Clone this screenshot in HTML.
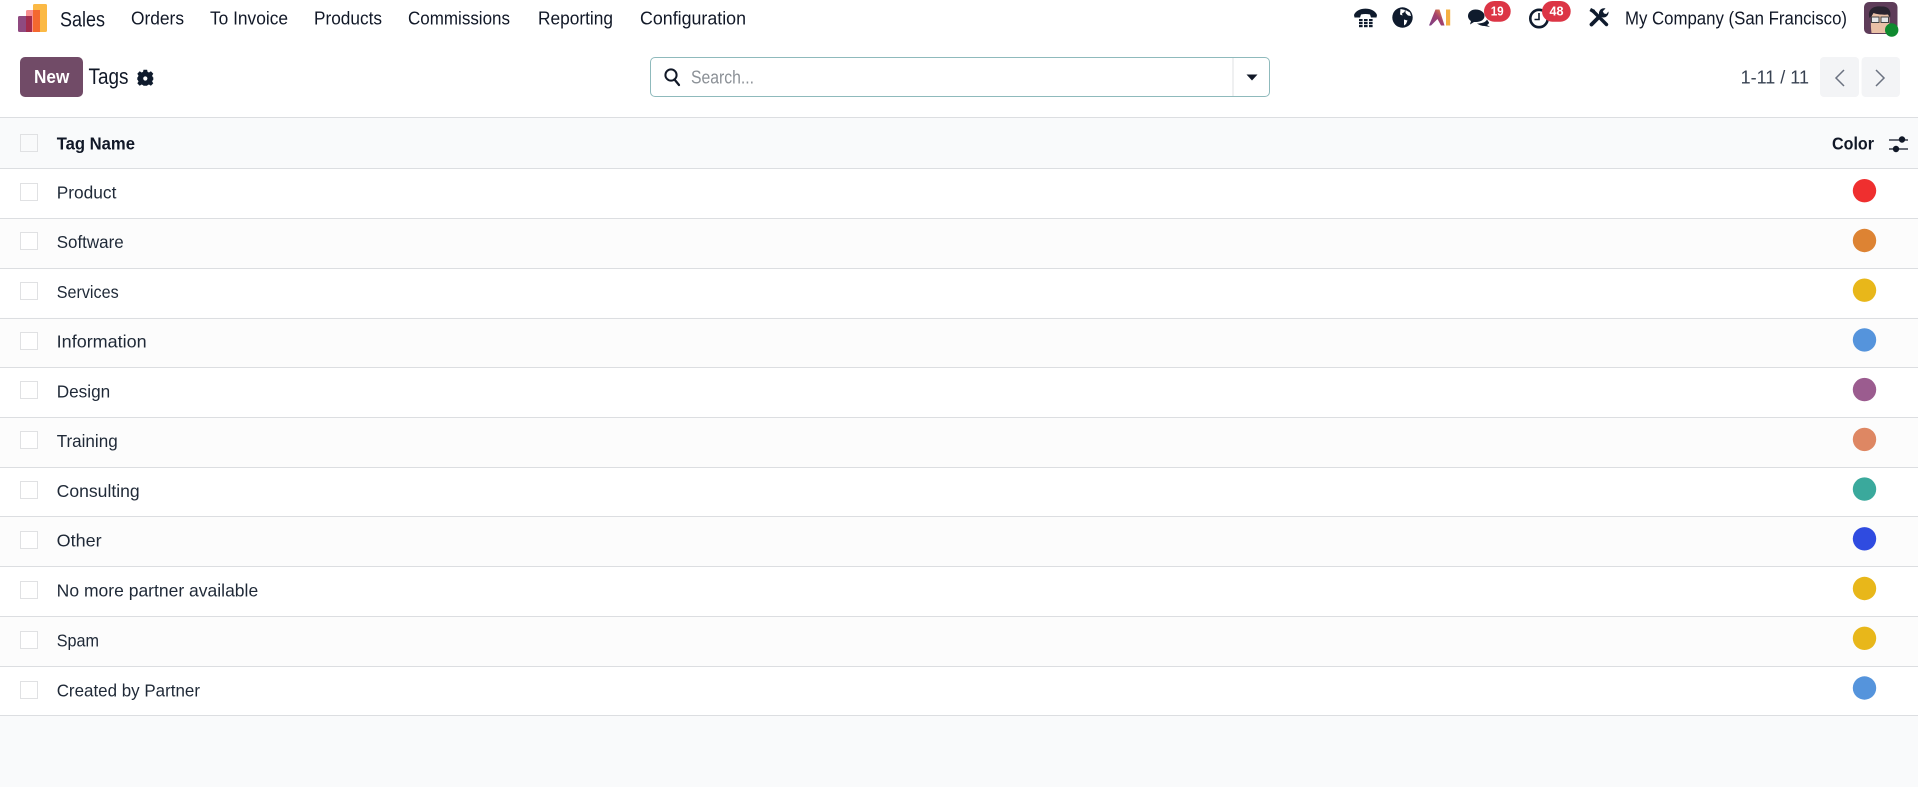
<!DOCTYPE html>
<html lang="en"><head><meta charset="utf-8"><title>Tags</title>
<style>
html,body{margin:0;padding:0;background:#fff;width:1918px;height:787px;overflow:hidden}
svg{display:block;position:absolute;left:0;top:0}
text{font-family:"Liberation Sans",sans-serif;font-size:17.5px;fill:#1f2937}
.n{font-size:18px;fill:#111827}
.b{font-weight:bold}
.r{fill:#1f2937}
</style></head><body>
<svg width="1918" height="787" viewBox="0 0 1918 787" xmlns="http://www.w3.org/2000/svg">
<rect width="1918" height="787" fill="#fff"/>
<!-- logo -->
<rect x="33" y="4" width="14" height="28" rx="1.5" fill="#fbb945"/>
<rect x="26" y="10" width="14" height="22" rx="1.5" fill="#f78f8f"/>
<rect x="33" y="10" width="7" height="22" fill="#f4682f"/>
<rect x="18" y="16" width="14" height="16" rx="1.5" fill="#8f4a80"/>
<rect x="26" y="16" width="6" height="16" fill="#a32c4c"/>
<text x="60" y="26.5" style="font-size:21px;fill:#111827" textLength="45" lengthAdjust="spacingAndGlyphs">Sales</text>
<text class="n" x="131" y="24.5" textLength="53" lengthAdjust="spacingAndGlyphs">Orders</text>
<text class="n" x="210" y="24.5" textLength="78" lengthAdjust="spacingAndGlyphs">To Invoice</text>
<text class="n" x="314" y="24.5" textLength="68" lengthAdjust="spacingAndGlyphs">Products</text>
<text class="n" x="408" y="24.5" textLength="102" lengthAdjust="spacingAndGlyphs">Commissions</text>
<text class="n" x="538" y="24.5" textLength="75" lengthAdjust="spacingAndGlyphs">Reporting</text>
<text class="n" x="640" y="24.5" textLength="106" lengthAdjust="spacingAndGlyphs">Configuration</text>

<!-- phone -->
<path d="M1354 15C1357 6.500 1374 6.500 1377 15L1376.500 17.500H1371L1370 14.500C1367 13.800 1364 13.800 1361 14.500L1360 17.500H1354.500Z" fill="#0f1b2d"/>
<g fill="#0f1b2d"><rect x="1359" y="19" width="3.600" height="2.200"/><rect x="1364" y="19" width="3.600" height="2.200"/><rect x="1369" y="19" width="3.600" height="2.200"/><rect x="1359" y="22" width="3.600" height="2.200"/><rect x="1364" y="22" width="3.600" height="2.200"/><rect x="1369" y="22" width="3.600" height="2.200"/><rect x="1359" y="25" width="3.600" height="2.200"/><rect x="1364" y="25" width="3.600" height="2.200"/><rect x="1369" y="25" width="3.600" height="2.200"/></g>
<!-- globe -->
<circle cx="1402.500" cy="17.500" r="10.200" fill="#0f1b2d"/>
<path d="M1400.500 9L1405 10L1404.500 12L1402 13.500L1402.500 15.500L1400 14.500ZM1405.500 10L1410 12.500L1411 16L1408 15.500L1405.500 13ZM1404 19.500L1407.500 20.500L1406 24L1404 25.500Z" fill="#fff"/>
<!-- AI -->
<defs><linearGradient id="ai" x1="0" y1="1" x2="1" y2="0"><stop offset="0" stop-color="#7b3f86"/><stop offset=".55" stop-color="#a3416c"/><stop offset="1" stop-color="#f39a3a"/></linearGradient></defs>
<path d="M1435.500 9.500H1439.500L1444.500 25.500H1441L1437.500 19L1431 25.500H1429Z" fill="url(#ai)"/>
<rect x="1446" y="9.500" width="4.200" height="16" fill="#f5b041"/>
<!-- chat -->
<path d="M1475.500 9.500C1481 9.500 1484.500 12.500 1484.500 16C1484.500 19.500 1481 22 1476 22L1474 22L1470 24.500L1471 21C1469.300 20 1468 18 1468 16C1468 12.500 1471 9.500 1475.500 9.500Z" fill="#0f1b2d"/>
<path d="M1477 23.500C1481.500 23.500 1485.500 22.500 1487 19.500L1489 22.500C1489 23.500 1488 24.500 1487 25L1490 27L1484.500 26C1482 26 1479 25 1477 23.500Z" fill="#0f1b2d"/>
<rect x="1484" y="1" width="26.700" height="20.700" rx="10.300" fill="#dc3545"/>
<text x="1490.700" y="15.500" class="b" style="font-size:13px;fill:#fff" textLength="13" lengthAdjust="spacingAndGlyphs">19</text>
<!-- clock -->
<circle cx="1539" cy="18.500" r="8.700" fill="none" stroke="#0f1b2d" stroke-width="2.600"/>
<path d="M1539 13V19.500H1534.500" fill="none" stroke="#0f1b2d" stroke-width="1.600"/>
<rect x="1542" y="1" width="28.700" height="20.700" rx="10.300" fill="#dc3545"/>
<text x="1549.500" y="15.500" class="b" style="font-size:13px;fill:#fff" textLength="14" lengthAdjust="spacingAndGlyphs">48</text>
<!-- tools -->
<path d="M1606.500 24.500L1593.500 11.500" stroke="#0f1b2d" stroke-width="3.400" fill="none" stroke-linecap="round"/>
<path d="M1589.500 11L1591 8L1595 10L1593.500 13.500Z" fill="#0f1b2d"/>
<path d="M1591.500 24.500L1601 15" stroke="#0f1b2d" stroke-width="3.800" stroke-linecap="round" fill="none"/>
<path d="M1599 14.500C1598.500 10.500 1601.500 7.500 1605.500 8.500L1602.800 11.300L1604 13.500L1606.300 14L1608.500 11.500C1609 15 1606 18 1602.500 17.500Z" fill="#0f1b2d"/>
<text x="1625" y="24.500" class="n" textLength="222" lengthAdjust="spacingAndGlyphs">My Company (San Francisco)</text>
<!-- avatar -->
<rect x="1864" y="2" width="33.500" height="32" rx="5" fill="#5e3c59"/>
<path d="M1871.500 33C1870.500 25 1870.500 17 1873 13H1888.500C1890 17 1890 25 1887 33Z" fill="#e9c0a6"/>
<path d="M1869.500 18C1867 10 1873 5.500 1881 6.500C1888 6 1892 10 1890 18L1888 14.500C1884 15 1877 14.500 1873.500 13C1872.500 15 1871.500 16.500 1869.500 18Z" fill="#2a2430"/>
<rect x="1871.500" y="17" width="7.500" height="5.500" fill="#e6e8ea" stroke="#444" stroke-width="1"/>
<rect x="1881" y="17" width="7.500" height="5.500" fill="#e6e8ea" stroke="#444" stroke-width="1"/>
<circle cx="1891.700" cy="30" r="6.700" fill="#0f8a2f"/>

<!-- control panel -->
<rect x="20" y="57" width="63" height="40" rx="5" fill="#714b67"/>
<text x="34" y="83" class="b" style="font-size:18px;fill:#fff" textLength="35.300" lengthAdjust="spacingAndGlyphs">New</text>
<text x="88.500" y="84" style="font-size:22px;fill:#111827" textLength="40" lengthAdjust="spacingAndGlyphs">Tags</text>
<g fill="#0f1b2d" transform="translate(145.300 77.700)">
<path fill-rule="evenodd" d="M-1.800-8H1.800L2.300-5.800L3.700-5.200L5.600-6.400L8-4L6.800-2.100L7.400-.6L8-.3V2.100L7.400 2.500L6.800 3.900L8 5.600L5.600 8L3.700 6.800L2.300 7.400L1.800 8H-1.800L-2.300 7.400L-3.700 6.800L-5.600 8L-8 5.600L-6.800 3.900L-7.400 2.500L-8 2.100V-.3L-7.400-.6L-6.800-2.100L-8-4L-5.600-6.400L-3.700-5.200L-2.300-5.800ZM2.100.8A2.100 2.100 0 1 0-2.100.8A2.100 2.100 0 1 0 2.100.8Z"/>
</g>

<!-- search -->
<rect x="650.500" y="57.500" width="619" height="39" rx="4.500" fill="#fff" stroke="#8fbabc" stroke-width="1"/>
<line x1="1233" y1="58" x2="1233" y2="96" stroke="#dfe1e3" stroke-width="1"/>
<circle cx="671" cy="75" r="5.600" fill="none" stroke="#111827" stroke-width="2"/>
<line x1="674.500" y1="79.500" x2="679" y2="85" stroke="#111827" stroke-width="2.200" stroke-linecap="round"/>
<text x="691" y="83.500" style="font-size:18.500px;fill:#8b9096" textLength="63" lengthAdjust="spacingAndGlyphs">Search...</text>
<path d="M1246.500 74.500H1257.500L1252 80.500Z" fill="#111827"/>

<!-- pager -->
<text x="1740.600" y="83.500" style="font-size:18.500px;fill:#374151" textLength="68.400" lengthAdjust="spacingAndGlyphs">1-11 / 11</text>
<rect x="1820" y="57" width="39" height="40" rx="4" fill="#f3f4f6"/>
<rect x="1861.600" y="57" width="38.400" height="40" rx="4" fill="#f3f4f6"/>
<path d="M1844 70L1836 78L1844 86" fill="none" stroke="#6b7280" stroke-width="1.500"/>
<path d="M1876 70L1884 78L1876 86" fill="none" stroke="#6b7280" stroke-width="1.500"/>

<!-- table -->
<rect x="0" y="117" width="1918" height="670" fill="#f9fafb"/>
<rect x="0" y="168.500" width="1918" height="49.700" fill="#fff"/>
<rect x="0" y="218.200" width="1918" height="49.700" fill="#fcfcfc"/>
<rect x="0" y="268" width="1918" height="49.700" fill="#fff"/>
<rect x="0" y="317.700" width="1918" height="49.700" fill="#fcfcfc"/>
<rect x="0" y="367.400" width="1918" height="49.700" fill="#fff"/>
<rect x="0" y="417.100" width="1918" height="49.700" fill="#fcfcfc"/>
<rect x="0" y="466.900" width="1918" height="49.700" fill="#fff"/>
<rect x="0" y="516.600" width="1918" height="49.700" fill="#fcfcfc"/>
<rect x="0" y="566.300" width="1918" height="49.700" fill="#fff"/>
<rect x="0" y="616" width="1918" height="49.700" fill="#fcfcfc"/>
<rect x="0" y="665.800" width="1918" height="49.700" fill="#fff"/>
<g stroke="#dcdee1" stroke-width="1">
<line x1="0" x2="1918" y1="117.500" y2="117.500"/>
<line x1="0" x2="1918" y1="168.500" y2="168.500"/>
<line x1="0" x2="1918" y1="218.500" y2="218.500"/>
<line x1="0" x2="1918" y1="268.500" y2="268.500"/>
<line x1="0" x2="1918" y1="318.500" y2="318.500"/>
<line x1="0" x2="1918" y1="367.500" y2="367.500"/>
<line x1="0" x2="1918" y1="417.500" y2="417.500"/>
<line x1="0" x2="1918" y1="467.500" y2="467.500"/>
<line x1="0" x2="1918" y1="516.500" y2="516.500"/>
<line x1="0" x2="1918" y1="566.500" y2="566.500"/>
<line x1="0" x2="1918" y1="616.500" y2="616.500"/>
<line x1="0" x2="1918" y1="666.500" y2="666.500"/>
<line x1="0" x2="1918" y1="715.500" y2="715.500"/>
</g>
<g fill="#fff" stroke="#e0e1e3" stroke-width="1">
<rect x="20.500" y="134.500" width="17" height="17" fill="#f9fafb"/>
<rect x="20.500" y="183.500" width="17" height="17"/>
<rect x="20.500" y="232.500" width="17" height="17"/>
<rect x="20.500" y="282.500" width="17" height="17"/>
<rect x="20.500" y="332.500" width="17" height="17"/>
<rect x="20.500" y="381.500" width="17" height="17"/>
<rect x="20.500" y="431.500" width="17" height="17"/>
<rect x="20.500" y="481.500" width="17" height="17"/>
<rect x="20.500" y="531.500" width="17" height="17"/>
<rect x="20.500" y="581.500" width="17" height="17"/>
<rect x="20.500" y="631.500" width="17" height="17"/>
<rect x="20.500" y="681.500" width="17" height="17"/>
</g>
<text x="56.700" y="149.500" class="b" style="font-size:17.500px;fill:#111827" textLength="78.300" lengthAdjust="spacingAndGlyphs">Tag Name</text>
<text x="1832" y="149.500" class="b" style="font-size:17.500px;fill:#111827" textLength="42" lengthAdjust="spacingAndGlyphs">Color</text>
<g stroke="#111827" stroke-width="1.300"><line x1="1889" x2="1908" y1="140" y2="140"/><line x1="1889" x2="1908" y1="149" y2="149"/></g>
<circle cx="1902" cy="139.500" r="3.200" fill="#111827"/><circle cx="1896" cy="149" r="3.200" fill="#111827"/>

<text class="r" x="56.700" y="198.500" textLength="59.700" lengthAdjust="spacingAndGlyphs">Product</text>
<text class="r" x="56.700" y="248" textLength="67" lengthAdjust="spacingAndGlyphs">Software</text>
<text class="r" x="56.700" y="298" textLength="62" lengthAdjust="spacingAndGlyphs">Services</text>
<text class="r" x="56.700" y="347.500" textLength="90" lengthAdjust="spacingAndGlyphs">Information</text>
<text class="r" x="56.700" y="397.500" textLength="53.500" lengthAdjust="spacingAndGlyphs">Design</text>
<text class="r" x="56.700" y="447" textLength="61" lengthAdjust="spacingAndGlyphs">Training</text>
<text class="r" x="56.700" y="497" textLength="83" lengthAdjust="spacingAndGlyphs">Consulting</text>
<text class="r" x="56.700" y="546.500" textLength="45" lengthAdjust="spacingAndGlyphs">Other</text>
<text class="r" x="56.700" y="596.500" textLength="201.500" lengthAdjust="spacingAndGlyphs">No more partner available</text>
<text class="r" x="56.700" y="646.500" textLength="42.300" lengthAdjust="spacingAndGlyphs">Spam</text>
<text class="r" x="56.700" y="696.500" textLength="143.300" lengthAdjust="spacingAndGlyphs">Created by Partner</text>

<circle cx="1864.500" cy="190.700" r="11.700" fill="#ef2f2f"/>
<circle cx="1864.500" cy="240.500" r="11.700" fill="#dd8333"/>
<circle cx="1864.500" cy="290.200" r="11.700" fill="#e8b71a"/>
<circle cx="1864.500" cy="339.900" r="11.700" fill="#5594dc"/>
<circle cx="1864.500" cy="389.600" r="11.700" fill="#9b5c8f"/>
<circle cx="1864.500" cy="439.400" r="11.700" fill="#de8763"/>
<circle cx="1864.500" cy="489.100" r="11.700" fill="#3aa99c"/>
<circle cx="1864.500" cy="538.800" r="11.700" fill="#2f4be0"/>
<circle cx="1864.500" cy="588.500" r="11.700" fill="#e8b71a"/>
<circle cx="1864.500" cy="638.300" r="11.700" fill="#e8b71a"/>
<circle cx="1864.500" cy="688" r="11.700" fill="#5594dc"/>
</svg>
</body></html>
